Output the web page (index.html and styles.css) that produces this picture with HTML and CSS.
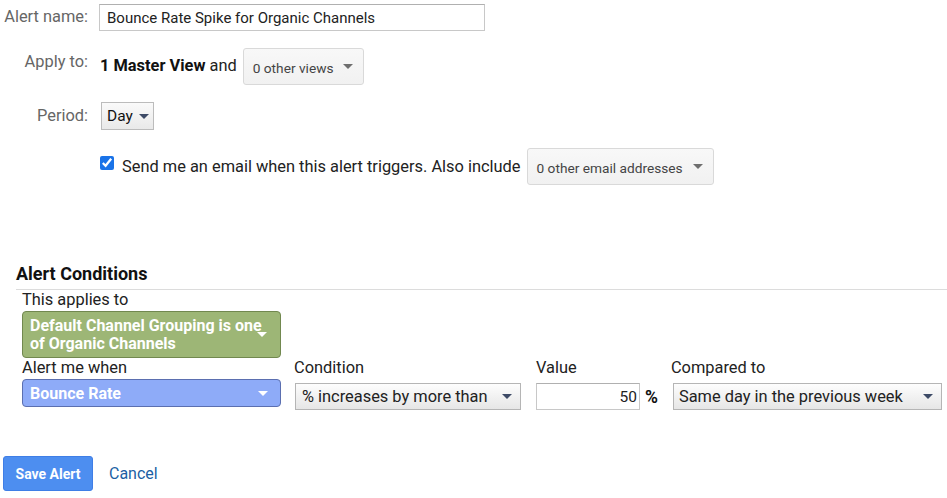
FILE: index.html
```html
<!DOCTYPE html>
<html>
<head>
<meta charset="utf-8">
<link rel="stylesheet" href="styles.css">
</head>
<body>
<div class="settings">
  <div class="row row-name">
    <div class="label">Alert name:</div>
    <input class="text-input" type="text" value="Bounce Rate Spike for Organic Channels">
  </div>
  <div class="row row-apply">
    <div class="label label-low">Apply to:</div>
    <div class="apply-content">
      <span class="apply-text"><b>1 Master View</b> and</span>
      <button class="menu-btn btn-views">0 other views <span class="caret caret-gray"></span></button>
    </div>
  </div>
  <div class="row row-period">
    <div class="label label-low">Period:</div>
    <button class="day-btn">Day <span class="caret caret-navy"></span></button>
  </div>
  <div class="row row-email">
    <div class="label"></div>
    <div class="email-content">
      <input class="check" type="checkbox" checked>
      <span class="email-text">Send me an email when this alert triggers. Also include</span>
      <button class="menu-btn btn-emails">0 other email addresses <span class="caret caret-gray"></span></button>
    </div>
  </div>
</div>

<section class="conditions">
  <h2 class="section-title">Alert Conditions</h2>
  <div class="cond-body">
    <div class="field-label">This applies to</div>
    <div class="chip chip-green">Default Channel Grouping is one of Organic Channels<span class="caret caret-white caret-green"></span></div>
    <div class="cond-grid">
      <div class="col col-metric">
        <div class="field-label">Alert me when</div>
        <div class="chip chip-blue">Bounce Rate<span class="caret caret-white"></span></div>
      </div>
      <div class="col col-condition">
        <div class="field-label">Condition</div>
        <div class="select">% increases by more than<span class="caret caret-navy"></span></div>
      </div>
      <div class="col col-value">
        <div class="field-label">Value</div>
        <div class="value-wrap">
          <input class="value-input" type="text" value="50">
          <span class="pct">%</span>
        </div>
      </div>
      <div class="col col-compare">
        <div class="field-label">Compared to</div>
        <div class="select select-wide">Same day in the previous week<span class="caret caret-navy"></span></div>
      </div>
    </div>
  </div>
</section>

<div class="actions">
  <button class="save-btn">Save Alert</button>
  <a class="cancel" href="#">Cancel</a>
</div>
</body>
</html>
```
FILE: styles.css
```css
* { box-sizing: border-box; }
body {
  margin: 0;
  font-family: Roboto, "Liberation Sans", Arial, sans-serif;
  color: #222;
  background: #fff;
  width: 947px;
  height: 498px;
  overflow: hidden;
}
button { font-family: inherit; }

.settings { padding-top: 4px; }
.row { display: flex; align-items: flex-start; }
.label {
  width: 88px;
  flex: none;
  text-align: right;
  font-size: 16.4px;
  color: #666;
  line-height: 24px;
}
.label-low { padding-top: 2px; }
.row-name .label { line-height: 26px; }
.text-input {
  margin-left: 11px;
  width: 386px;
  height: 27px;
  border: 1px solid #c8c8c8;
  border-top-color: #b0b0b0;
  padding: 0 7px;
  font-family: inherit;
  font-size: 15px;
  color: #222;
  outline: none;
}
.row-apply { margin-top: 17px; }
.apply-content {
  margin-left: 12px;
  display: flex;
  align-items: center;
}
.apply-text {
  font-size: 16.4px;
  color: #222;
  padding-bottom: 3px;
}
.apply-text b { font-weight: 700; color: #111; }
.menu-btn {
  height: 37px;
  border: 1px solid #d9d9d9;
  border-radius: 3px;
  background: linear-gradient(#f8f8f8, #f1f1f1);
  font-size: 13.7px;
  color: #444;
  display: flex;
  align-items: center;
  justify-content: space-between;
  padding: 2px 10px 0 9px;
}
.btn-views { width: 121px; margin-left: 6px; }
.caret {
  display: inline-block;
  width: 0;
  height: 0;
  border-left: 5px solid transparent;
  border-right: 5px solid transparent;
  border-top: 5px solid #777;
}
.caret-gray { border-top-color: #6e6e6e; margin-bottom: 2px; }
.caret-navy { border-top-color: #3d4a66; }
.caret-white { border-top-color: #fff; }

.row-period { margin-top: 17px; }
.day-btn {
  margin-left: 13px;
  width: 53px;
  height: 28px;
  border: 1px solid #bcbcbc;
  background: linear-gradient(#fafafa, #e9e9e9);
  font-size: 15.5px;
  color: #111;
  padding: 0 4px 0 5px;
  display: flex;
  align-items: center;
  justify-content: space-between;
}

.row-email { margin-top: 18px; }
.email-content {
  margin-left: 11px;
  display: flex;
  align-items: flex-start;
}
.check {
  margin: 8px 0 0 1px;
  width: 14px;
  height: 14px;
  accent-color: #1a73e8;
}
.email-text {
  margin-left: 8px;
  font-size: 16.4px;
  color: #222;
  line-height: 34px;
  padding-top: 2px;
}
.btn-emails { width: 187px; margin-left: 6px; }

.conditions {
  margin-top: 77px;
  padding-left: 16px;
}
.section-title {
  margin: 0;
  font-size: 18px;
  font-weight: 700;
  color: #111;
  line-height: 22px;
  padding-top: 1px;
  padding-bottom: 4px;
  border-bottom: 1px solid #dcdcdc;
}
.cond-body { padding-left: 6px; }
.field-label {
  font-size: 16.4px;
  color: #222;
  line-height: 17px;
  padding-top: 1px;
}
.chip {
  position: relative;
  color: #fff;
  font-weight: 700;
  font-size: 16px;
  border-radius: 4px;
  width: 259px;
  padding: 0 7px;
}
.chip-green {
  margin-top: 3px;
  height: 47px;
  background: #9db676;
  border: 1px solid #71884f;
  line-height: 18px;
  padding-top: 5px;
  padding-right: 10px;
}
.caret-green { position: absolute; right: 13px; top: 20px; }
.chip-blue {
  margin-top: 3px;
  height: 28px;
  background: #8eabf8;
  border: 1px solid #5b6fb0;
  line-height: 25px;
  display: flex;
  align-items: center;
  justify-content: space-between;
  padding-right: 12px;
}
.cond-grid { display: flex; align-items: flex-start; }
.col-condition { margin-left: 13px; }
.col-value { margin-left: 15px; }
.col-compare { margin-left: 13px; }
.select {
  margin-top: 7px;
  height: 27px;
  width: 226px;
  margin-left: 1px;
  border: 1px solid #b5b5b5;
  background: linear-gradient(#fdfdfd, #e6e6e6);
  font-size: 16.4px;
  color: #222;
  display: flex;
  align-items: center;
  justify-content: space-between;
  padding: 0 8px 0 6px;
}
.select-wide { width: 269px; margin-left: 2px; padding-left: 5px; }
.value-wrap {
  margin-top: 7px;
  display: flex;
  align-items: center;
}
.value-input {
  width: 104px;
  height: 27px;
  border: 1px solid #c8c8c8;
  border-top-color: #b0b0b0;
  text-align: right;
  padding: 0 2px;
  font-family: inherit;
  font-size: 15.5px;
  color: #222;
  outline: none;
}
.pct {
  margin-left: 5px;
  font-weight: 700;
  font-size: 17.5px;
  color: #111;
}

.actions {
  margin-top: 46px;
  padding-left: 3px;
  display: flex;
  align-items: center;
}
.save-btn {
  width: 90px;
  height: 35px;
  border: 1px solid #3f7ee6;
  border-radius: 3px;
  background: #4d8ef0;
  color: #fff;
  font-weight: 700;
  font-size: 14px;
}
.cancel {
  margin-left: 16px;
  font-size: 16px;
  color: #1c5fa4;
  text-decoration: none;
}
```
